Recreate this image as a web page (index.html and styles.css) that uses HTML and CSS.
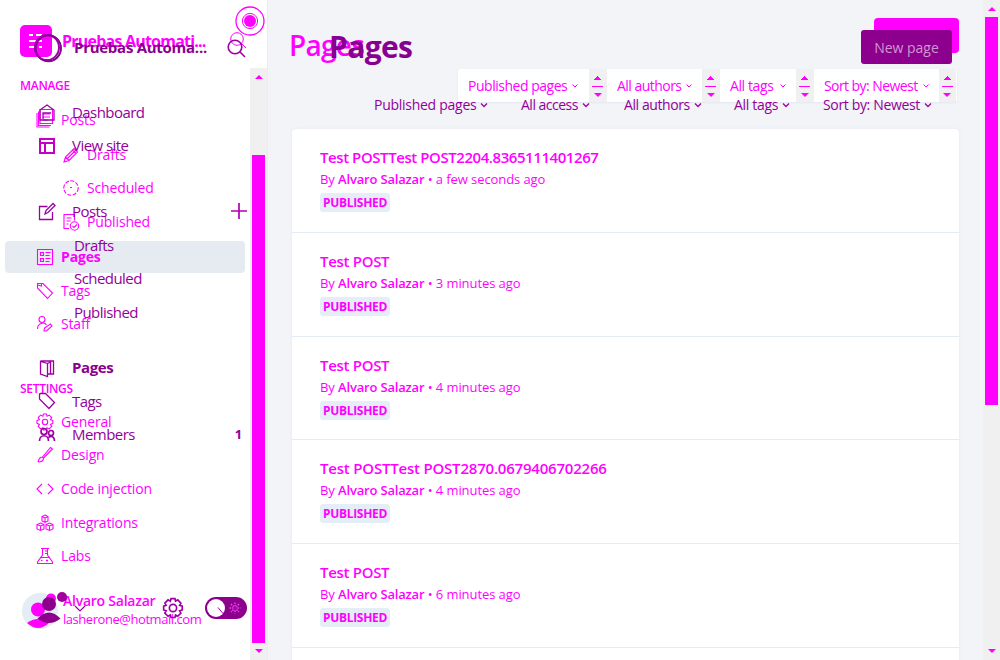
FILE: index.html
```
<!DOCTYPE html>
<html lang="en">
<head>
<meta charset="utf-8">
<title>Pages</title>
<link rel="stylesheet" href="styles.css">
</head>
<body>
<div class="app">
  <aside class="sidebar">
    <header class="brand">
      <svg class="brand-logo" width="34" height="34" viewBox="0 0 34 34"><rect x="1" y="1" width="32" height="32" rx="5" fill="#f0f"/><path d="M10 11h4M17 11h6M10 17h13M10 23h7M20 23h3" stroke="#fff" stroke-width="2"/></svg>
      <span class="brand-name">Pruebas Automati...</span>
      <svg class="brand-search" width="20" height="20" viewBox="0 0 20 20"><circle cx="9" cy="8" r="6.3"/><path d="M13 12l5 5"/></svg>
    </header>
    <div class="side-body">
      <nav class="menu">
        <div class="head">MANAGE</div>
        <div class="item tall"><svg viewBox="0 0 20 20"><path d="M5 -.5h12.500v14H5zM3.500 1.500v14h12.500M2 3v14h12.500M8 4h7M8 7h7M8 10h5"/></svg><span>Posts</span></div>
        <div class="item sub"><svg viewBox="0 0 20 20"><path d="M3 17l1.500-5L13 3.500l3.500 3.500L8 15.500zM4.500 12l3.500 3.500M6.500 13.500l8-8M11.500 5l3.500 3.500"/></svg><span>Drafts</span></div>
        <div class="item sub"><svg viewBox="0 0 20 20"><circle cx="10" cy="10" r="7.200" stroke-dasharray="4 1.500"/><path d="M9 9.500h2"/></svg><span>Scheduled</span></div>
        <div class="item sub"><svg viewBox="0 0 20 20"><path d="M8 16.500H3v-14h10.500v6M5.500 6h5M5.500 9h4M5.500 12h2"/><circle cx="13.500" cy="14" r="4.200"/><path d="M11.500 14l1.500 1.500 3-3"/></svg><span>Published</span></div>
        <div class="item active"><svg viewBox="0 0 20 20"><path d="M2.500 2.500h15v15h-15zM5.500 5.500h3v3h-3zM5.500 11.500h3v3h-3zM10.500 5.500h5M10.500 8.500h4M10.500 11.500h5M10.500 14.500h4"/></svg><span>Pages</span></div>
        <div class="item"><svg viewBox="0 0 20 20"><path d="M2.500 7V2.500H8l9.500 9.500-5 5.500zM2.500 4l4 1V3"/></svg><span>Tags</span></div>
        <div class="item"><svg viewBox="0 0 20 20"><circle cx="7" cy="5.500" r="3"/><path d="M2.500 15c0-6 6.500-7.500 9-4M9 17l.5-3 6-4 1.500 2-5.500 5z"/></svg><span>Staff</span></div>
        <div class="head second">SETTINGS</div>
        <div class="item"><svg viewBox="0 0 20 20"><circle cx="10" cy="10" r="2.700"/><path d="M8.500 2h3l.6 2.300 2.200-1.200 2.400 2.400-1.200 2.200 2.300.7v3.200l-2.300.7 1.200 2.200-2.400 2.400-2.200-1.200-.6 2.300h-3l-.7-2.300-2.200 1.200-2.400-2.400 1.200-2.200L2 11.500V8.400l2.400-.7-1.200-2.200 2.400-2.400 2.200 1.200z"/></svg><span>General</span></div>
        <div class="item"><svg viewBox="0 0 20 20"><path d="M3 17c1-4 2-5 4.500-5l1 1c0 3-2 4-5.500 4M7.500 12L15.500 2.500l2 1.500-9 9"/></svg><span>Design</span></div>
        <div class="item"><svg viewBox="0 0 20 20"><path d="M7 5l-5 5 5 5M13 5l5 5-5 5"/></svg><span>Code injection</span></div>
        <div class="item"><svg viewBox="0 0 20 20"><path d="M10 2l3 1.500V8l-3 1.500L7 8V3.500zM7 3.500L10 5l3-1.500M10 5v4.500M5.500 10l3.500 1.500V16L5.500 17.500 2 16v-4.500zM2 11.500L5.500 13 9 11.500M5.500 13v4.500M14.500 10l3.500 1.500V16l-3.500 1.500L11 16v-4.500zM11 11.500l3.500 1.500 3.500-1.500M14.500 13v4.500"/></svg><span>Integrations</span></div>
        <div class="item"><svg viewBox="0 0 20 20"><path d="M6 2.500h8M7.500 2.500V9L2.500 16v1.500h15V16l-5-7V2.500M10 5h2.500M10 7.500h2.500M5 11.500h10M6 14.500h1.500M12 13.500v2M11 14.500h2"/></svg><span>Labs</span></div>
      </nav>
      <footer class="user">
        <svg width="42" height="38" viewBox="20 591 42 38"><circle cx="40" cy="610" r="18" fill="#e4ecf5"/><circle cx="51" cy="597.500" r="5" fill="#f0f"/><circle cx="38" cy="608.500" r="7" fill="#f0f"/><path d="M27 622q11-8 22 0-11 10-22 0z" fill="#f0f"/></svg>
        <div class="user-text"><b>Alvaro Salazar</b><span>lasherone@hotmail.com</span></div>
      </footer>
      <div class="vbar side-bar"><i class="up"></i><i class="thumb"></i><i class="down"></i></div>
    </div>
  </aside>

  <main class="main">
    <div class="content">
      <header class="top"><h1>Pages</h1><div class="new-shape"></div></header>
      <div class="filters">
        <div class="filter f1"><span>Published pages</span><svg viewBox="0 0 8 8"><path d="M1.500 2.500L4 5l2.500-2.500"/></svg></div><i class="spin"></i>
        <div class="filter f2"><span>All authors</span><svg viewBox="0 0 8 8"><path d="M1.500 2.500L4 5l2.500-2.500"/></svg></div><i class="spin"></i>
        <div class="filter f3"><span>All tags</span><svg viewBox="0 0 8 8"><path d="M1.500 2.500L4 5l2.500-2.500"/></svg></div><i class="spin"></i>
        <div class="filter f4"><span>Sort by: Newest</span><svg viewBox="0 0 8 8"><path d="M1.500 2.500L4 5l2.500-2.500"/></svg></div><i class="spin last"></i>
      </div>
      <section class="list">
        <article class="row"><h3 class="long">Test POSTTest POST2204.8365111401267</h3><p>By <b>Alvaro Salazar</b> • a few seconds ago</p><span class="badge">PUBLISHED</span></article>
        <article class="row"><h3>Test POST</h3><p>By <b>Alvaro Salazar</b> • 3 minutes ago</p><span class="badge">PUBLISHED</span></article>
        <article class="row"><h3>Test POST</h3><p>By <b>Alvaro Salazar</b> • 4 minutes ago</p><span class="badge">PUBLISHED</span></article>
        <article class="row"><h3 class="long wide">Test POSTTest POST2870.0679406702266</h3><p>By <b>Alvaro Salazar</b> • 4 minutes ago</p><span class="badge">PUBLISHED</span></article>
        <article class="row"><h3>Test POST</h3><p>By <b>Alvaro Salazar</b> • 6 minutes ago</p><span class="badge">PUBLISHED</span></article>
      </section>
    </div>
    <div class="vbar main-bar"><i class="up"></i><i class="thumb"></i><i class="down"></i></div>
  </main>
</div>

<div class="ghost">
  <div class="g-side">
    <div class="g-brand">
      <svg width="32" height="32" viewBox="0 0 32 32"><circle cx="16" cy="16" r="13" fill="none" stroke="#303030" stroke-width="1.500"/><ellipse cx="15" cy="15.500" rx="12" ry="12.500" fill="none" stroke="#a000a8" stroke-width="2"/><ellipse cx="16.500" cy="16.500" rx="12.500" ry="13" fill="none" stroke="#90009a" stroke-width="1.500"/></svg>
      <span>Pruebas Automa...</span>
      <svg class="g-search" width="20" height="22" viewBox="0 0 20 22"><circle cx="9" cy="10" r="6.800"/><path d="M14 15l5 5"/></svg>
    </div>
    <div class="g-item"><svg viewBox="0 0 20 20"><path d="M3 8l7-5 7 5v10H3zM6 17v-6h8"/></svg><span>Dashboard</span></div>
    <div class="g-item"><svg class="bold" viewBox="0 0 20 20"><path d="M3 3h14v14H3zM3 7h14M8 7v10"/></svg><span>View site</span></div>
    <div class="g-item posts"><svg viewBox="0 0 20 20"><path d="M10.500 4.500H2.500v13h13V10M8 12l1-3.500 7-7 2 2-7 7z"/></svg><span>Posts</span><svg class="plus" viewBox="0 0 20 20"><path d="M2 10h16M10 2v16"/></svg></div>
    <div class="g-item sub"><span>Drafts</span></div>
    <div class="g-item sub"><span>Scheduled</span></div>
    <div class="g-item sub"><span>Published</span></div>
    <div class="g-item pages"><svg viewBox="0 0 20 20"><path d="M3.500 3.500l7 2v13l-7-2.500zM3.500 3H16.500v13H10.500M10.500 5.500l3-1.500v12"/></svg><b>Pages</b></div>
    <div class="g-item tags"><svg viewBox="0 0 20 20"><path d="M2.500 8V3.500q0-1 1-1H8.500l9 9-5.500 6z"/></svg><span>Tags</span></div>
    <div class="g-item members"><svg class="people" viewBox="0 0 20 20"><circle cx="7" cy="6.500" r="3"/><circle cx="14" cy="8" r="2.500"/><path d="M2.500 16c0-7 9-7 9 0M11.500 12.500c3-2.500 6-.5 6 3.500"/></svg><span>Members</span><em>1</em></div>
    <div class="g-user">
      <svg width="52" height="36" viewBox="36 590 52 36"><circle cx="49" cy="604" r="7" fill="#8d008d"/><path d="M37.500 618.500q11.500-12 23 0-11.500 9-23 0z" fill="#8d008d"/><circle cx="62" cy="597" r="5" fill="#a000a0"/><path d="M75 606l5 5 5-5" fill="none" stroke="#a000a8" stroke-width="1.200"/></svg>
      <svg class="g-gear" width="22" height="22" viewBox="0 0 20 20"><circle cx="10" cy="10" r="3.300"/><path d="M8.200 1.500h3.600l.5 2.300 2-1.200 2.900 2.900-1.200 2.100 2.400.7v3.500l-2.400.7 1.200 2.100-2.900 2.900-2-1.200-.5 2.300H8.200l-.6-2.300-2.100 1.200-2.900-2.900 1.200-2.100-2.300-.7V8.300l2.300-.7-1.200-2.100 2.900-2.900 2.100 1.200z"/></svg>
      <svg class="g-toggle" width="42" height="22" viewBox="0 0 42 22"><rect width="42" height="22" rx="11" fill="#8d008d"/><circle cx="11" cy="11" r="9" fill="#fff"/><path class="hand" d="M13 10.500l5 6"/><path class="rays" d="M24.500 11h11M30 5.500v11M26 7l8 8M34 7l-8 8"/><circle class="sun" cx="30" cy="11" r="2"/></svg>
    </div>
  </div>
  <div class="g-main">
    <div class="g-top"><h2>Pages</h2><button>New page</button></div>
    <div class="g-filters">
      <div class="gf1"><span>Published pages</span><svg viewBox="0 0 8 8"><path d="M1 2.500L4 5.500l3-3"/></svg></div>
      <div class="gf2"><span>All access</span><svg viewBox="0 0 8 8"><path d="M1 2.500L4 5.500l3-3"/></svg></div>
      <div class="gf3"><span>All authors</span><svg viewBox="0 0 8 8"><path d="M1 2.500L4 5.500l3-3"/></svg></div>
      <div class="gf4"><span>All tags</span><svg viewBox="0 0 8 8"><path d="M1 2.500L4 5.500l3-3"/></svg></div>
      <div class="gf5"><span>Sort by: Newest</span><svg viewBox="0 0 8 8"><path d="M1 2.500L4 5.500l3-3"/></svg></div>
    </div>
  </div>
  <svg class="g-click" width="30" height="30" viewBox="0 0 30 30"><circle cx="15" cy="15" r="14" fill="#fff" stroke="#f0f" stroke-width="1.300"/><circle cx="15" cy="15" r="7.600" fill="none" stroke="#f0f"/><circle cx="15" cy="15" r="6" fill="#f0f"/></svg>
</div>
</body>
</html>
```
FILE: styles.css
```
* { box-sizing: border-box; }
body { margin: 0; width: 1000px; height: 660px; overflow: hidden; position: relative; background: #f2f4f8; color: #f0f; font: 14px/20px "Open Sans", "Noto Sans", sans-serif; }
h1, h2, h3, p { margin: 0; }
svg { flex: none; }

.app { display: flex; height: 660px; }
.sidebar { width: 268px; flex: none; background: #fff; border-right: 1px solid #e9ecf2; display: flex; flex-direction: column; }
.brand { height: 68px; flex: none; display: flex; align-items: flex-start; padding: 24px 0 0 19px; }
.brand-name { width: 172px; margin: 7px 0 0 9px; font-size: 16px; font-weight: 700; letter-spacing: -.78px; white-space: nowrap; }
.brand-search { margin: 7px 0 0 -6px; fill: none; stroke: #f0f; }

.side-body { flex: 1; min-height: 0; display: grid; grid-template: 507px 1fr / 250px 17px; }
.menu { padding-top: 1px; }
.head { height: 34px; line-height: 34px; padding-left: 20px; font-size: 12px; font-weight: 600; letter-spacing: -.3px; }
.head.second { margin-top: 31px; height: 33px; }
.item { height: 33.600px; display: flex; align-items: center; gap: 6px; padding-left: 35px; letter-spacing: -.15px; }
.item.tall { height: 33px; margin-bottom: 2px; }
.item svg { width: 20px; height: 20px; fill: none; stroke: #f0f; stroke-width: 1.100; }
.item.tall svg { overflow: visible; }
.item.sub { padding-left: 61px; }
.item.active { height: 32px; margin: 2px 5px 1px; padding-left: 30px; border-radius: 4px; background: #e6eaf1; font-weight: 700; }
.user { display: flex; padding: 17px 0 0 20px; gap: 1px; }
.user-text { width: 186px; }
.user-text b, .user-text span { display: block; line-height: 18px; white-space: nowrap; }
.user-text b { font-weight: 600; letter-spacing: -.24px; }
.user-text span { font-size: 13px; letter-spacing: -.45px; }

.vbar { width: 17px; background: #f0f0f0; display: flex; flex-direction: column; align-items: center; }
.side-bar { grid-area: 1 / 2 / 3 / 3; }
.up, .down { border: 4.500px solid transparent; height: 0; flex: none; }
.up { border-top: 0; border-bottom: 4px solid #f0f; }
.down { border-bottom: 0; border-top: 4px solid #f0f; }
.thumb { width: 13px; background: #f0f; flex: none; }
.side-bar .up { margin-top: 7px; }
.side-bar .thumb { height: 488px; margin-top: 76px; }
.side-bar .down { margin-top: 6px; }
.main-bar .up { margin-top: 7px; }
.main-bar .thumb { height: 388px; margin-top: 6px; }
.main-bar .down { margin-top: 244px; }

.main { flex: 1; display: flex; justify-content: space-between; min-width: 0; }
.content { width: 715px; padding-left: 24px; display: flex; flex-direction: column; }
.top { height: 69px; flex: none; display: flex; justify-content: space-between; padding-right: 24px; margin-left: -3px; }
.top h1 { font-size: 28px; font-weight: 600; line-height: 36px; margin-top: 27px; letter-spacing: -.7px; }
.new-shape { width: 85px; height: 35px; margin-top: 18px; border-radius: 4px; background: #f0f; }
.filters { width: 499px; height: 33px; flex: none; margin-left: 166px; display: flex; background: #fff; border-radius: 3px; box-shadow: 0 1px 2px #d9dde590; }
.filter { display: flex; align-items: center; justify-content: space-between; padding: 0 10px; white-space: nowrap; letter-spacing: -.48px; flex: none; }
.filter svg { width: 8px; height: 8px; fill: none; stroke: #f0f; }
.f1 { width: 131px; }
.f2 { width: 95px; padding-right: 9px; letter-spacing: -.53px; }
.f3 { width: 76px; padding-right: 9px; letter-spacing: -.4px; }
.f4 { width: 125px; padding-right: 9px; letter-spacing: -.57px; }
.spin { width: 18px; padding-right: 1px; background: #f0f0f0; display: flex; flex-direction: column; align-items: center; flex: none; }
.spin::before { content: ""; width: 11px; height: 17px; border-bottom: 1px solid #f0f; background: conic-gradient(from 135deg at 50% 0, #f0f 90deg, transparent 0) 50% 7px / 9px 4px no-repeat; }
.spin::after { content: ""; border: 4.500px solid transparent; border-top: 4px solid #f0f; border-bottom: 0; margin-top: 6px; }
.spin.last { width: 17px; }

.list { width: 667px; flex: 1; min-height: 0; margin-top: 27px; background: #fff; border-radius: 4px 4px 0 0; box-shadow: 0 0 3px #dfe3eacc; }
.row { height: 103.800px; padding: 17px 28px; border-bottom: 1px solid #e5ecf3; }
.row h3 { font-size: 15px; line-height: 22px; font-weight: 600; letter-spacing: -.3px; }
.row h3.long { letter-spacing: -.43px; }
.row h3.wide { letter-spacing: -.2px; }
.row p { font-size: 13px; line-height: 20px; margin-top: 1px; letter-spacing: -.08px; }
.row b { font-weight: 600; letter-spacing: -.18px; }
.badge { display: block; width: 70px; height: 19px; margin-top: 4px; border-radius: 3px; background: #e5eef6; font-size: 12px; line-height: 19px; font-weight: 700; text-align: center; letter-spacing: -.3px; }

/* second state, shown over the first */
.ghost { position: absolute; inset: 0; display: flex; color: #930099; }
.g-side { width: 268px; flex: none; font-size: 15px; letter-spacing: -.55px; }
.g-side svg { fill: none; stroke: #9c00a4; }
.g-brand { height: 95px; display: flex; align-items: flex-start; padding: 32px 0 0 32px; font-weight: 700; white-space: nowrap; letter-spacing: -.27px; color: #8a008f; }
.g-brand span { width: 152px; margin: 5px 0 0 10px; }
.g-brand .g-search { margin-top: 5px; stroke-width: 1.600; }
.g-item { height: 33.500px; display: flex; align-items: center; padding-left: 37px; }
.g-item svg { width: 20px; height: 20px; margin: 1px 15px 0 0; stroke-width: 1.300; }
.g-item svg.bold { stroke-width: 2; stroke: #c400c8; }
.g-item svg.people { stroke-width: 1.700; }
.g-item.posts { margin-top: 32.500px; }
.g-item .plus { margin: 0 0 0 122px; stroke: #b000b4; stroke-width: 1.700; }
.g-item.sub { padding-left: 74px; }
.g-item.pages { margin-top: 22px; color: #8a008f; }
.g-item b { letter-spacing: -.4px; }
.g-item em { margin-left: 100px; font-size: 13px; font-style: normal; font-weight: 700; }
.g-user { height: 36px; margin-top: 138.500px; padding-left: 36px; display: flex; align-items: center; }
.g-user .g-gear { margin-left: 74px; stroke-width: 1.500; }
.g-user .g-toggle { margin-left: 21px; stroke: none; }
.g-user > svg:first-child { stroke: none; }
.g-toggle .hand { stroke: #a000a0; }
.g-toggle .rays { stroke: #e44fe4; stroke-width: 1.400; stroke-dasharray: 1.600 1; }
.g-toggle .sun { fill: #b000b0; }

.g-main { width: 732px; }
.g-top { height: 92px; padding: 26px 48px 0 61px; display: flex; justify-content: space-between; }
.g-top h2 { font-size: 30px; line-height: 42px; font-weight: 700; letter-spacing: -.65px; color: #880090; }
.g-top button { width: 91px; height: 34px; margin-top: 4px; padding: 0; border: 0; border-radius: 3px; background: #8d008d; color: #d197d3; font: 14px/36px "Open Sans", sans-serif; }
.g-filters { height: 25px; margin-left: 106px; display: flex; align-items: center; white-space: nowrap; }
.g-filters div { display: flex; align-items: center; gap: 4px; flex: none; }
.g-filters svg { width: 8px; height: 8px; fill: none; stroke: #a000a8; stroke-width: 1.300; }
.gf1 { width: 147px; letter-spacing: -.27px; }
.gf2 { width: 103px; letter-spacing: -.5px; }
.gf3 { width: 110px; letter-spacing: -.42px; }
.gf4 { width: 89px; letter-spacing: -.3px; }
.gf5 { letter-spacing: -.35px; }
.g-click { position: absolute; left: 235px; top: 6px; }
```
